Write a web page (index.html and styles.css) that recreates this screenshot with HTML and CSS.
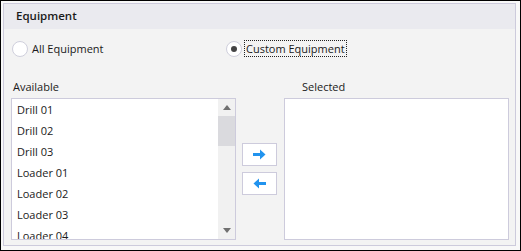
FILE: index.html
```html
<!DOCTYPE html>
<html>
<head>
<meta charset="utf-8">
<link rel="stylesheet" href="styles.css">
</head>
<body>
<div class="frame">
  <div class="panel">
    <div class="header">Equipment</div>
    <div class="radios">
      <label class="radio"><span class="circle"></span><span class="rlabel">All Equipment</span></label>
      <label class="radio checked"><span class="circle"><span class="dot"></span></span><span class="rlabel focus">Custom Equipment</span></label>
    </div>
    <div class="labels">
      <div class="lab-avail">Available</div>
      <div class="lab-sel">Selected</div>
    </div>
    <div class="lists">
      <div class="listbox avail">
        <div class="items">
          <div class="item">Drill 01</div>
          <div class="item">Drill 02</div>
          <div class="item">Drill 03</div>
          <div class="item">Loader 01</div>
          <div class="item">Loader 02</div>
          <div class="item">Loader 03</div>
          <div class="item">Loader 04</div>
        </div>
        <div class="scrollbar">
          <div class="sb-btn"><span class="tri-up"></span></div>
          <div class="sb-track"><div class="sb-thumb"></div></div>
          <div class="sb-btn"><span class="tri-down"></span></div>
        </div>
      </div>
      <div class="movers">
        <button class="mv">
          <svg width="13" height="11" viewBox="0 0 13 11"><rect x="0" y="4" width="9" height="3" fill="#2193ee"/><polygon points="7,0.5 12.5,5.5 7,10.5" fill="#2193ee"/></svg>
        </button>
        <button class="mv">
          <svg width="13" height="11" viewBox="0 0 13 11"><rect x="4" y="4" width="9" height="3" fill="#2193ee"/><polygon points="6,0.5 0.5,5.5 6,10.5" fill="#2193ee"/></svg>
        </button>
      </div>
      <div class="listbox sel"></div>
    </div>
  </div>
</div>
</body>
</html>
```

FILE: styles.css
```css
* { box-sizing: border-box; }
html, body { margin: 0; padding: 0; }
body {
  font-family: "Open Sans", "Noto Sans", sans-serif;
  font-size: 11px;
  color: #1a1a1a;
  background: #fff;
}
.frame {
  width: 521px;
  height: 251px;
  border: 1px solid #000;
  background: #f8f8f8;
  padding: 2px 4px 4px 2px;
}
.panel {
  height: 100%;
  border: 1px solid #cdcbdc;
  background: #f3f3f3;
  display: flex;
  flex-direction: column;
}
.header {
  height: 25px;
  background: #eaeaef;
  font-weight: 600;
  font-size: 11.5px;
  padding-left: 12px;
  line-height: 24px;
}
.radios {
  display: flex;
  margin-top: 11px;
  height: 17px;
  align-items: center;
}
.radio {
  display: flex;
  align-items: center;
  gap: 3px;
}
.radio:first-child {
  margin-left: 8px;
  width: 214px;
}
.circle {
  width: 16px;
  height: 16px;
  border: 1px solid #cfcfdc;
  border-radius: 50%;
  background: #fff;
  display: flex;
  align-items: center;
  justify-content: center;
}
.dot {
  width: 6px;
  height: 6px;
  border-radius: 50%;
  background: #444;
}
.rlabel { line-height: 15px; padding: 0 1px; }
.focus { border: 1px dotted #222; margin-left: -1px; }
.labels {
  display: flex;
  margin-top: 22px;
  height: 16px;
  line-height: 16px;
}
.lab-avail { margin-left: 9px; width: 289px; }
.lists {
  display: flex;
  margin-top: 3px;
  margin-left: 7px;
  height: 142px;
}
.listbox {
  width: 225px;
  height: 142px;
  border: 1px solid #cdcbdc;
  background: #fff;
}
.avail {
  display: flex;
  overflow: hidden;
}
.items {
  flex: 1;
  padding-left: 5px;
}
.item {
  height: 21px;
  line-height: 21px;
  white-space: nowrap;
}
.scrollbar {
  width: 17px;
  display: flex;
  flex-direction: column;
  background: #f1f1f1;
}
.sb-btn {
  height: 17px;
  display: flex;
  align-items: center;
  justify-content: center;
}
.sb-track { flex: 1; }
.sb-thumb {
  height: 30px;
  background: #dadade;
}
.tri-up, .tri-down {
  width: 0;
  height: 0;
  border-left: 4px solid transparent;
  border-right: 4px solid transparent;
}
.tri-up { border-bottom: 5px solid #707070; }
.tri-down { border-top: 5px solid #707070; }
.movers {
  width: 48px;
  display: flex;
  flex-direction: column;
  align-items: center;
  padding-top: 45px;
  gap: 6px;
}
.mv {
  width: 35px;
  height: 23px;
  border: 1px solid #cdcbdc;
  background: #fff;
  padding: 0;
  display: flex;
  align-items: center;
  justify-content: center;
  margin-left: -1px;
}
.mv svg { display: block; }
```
